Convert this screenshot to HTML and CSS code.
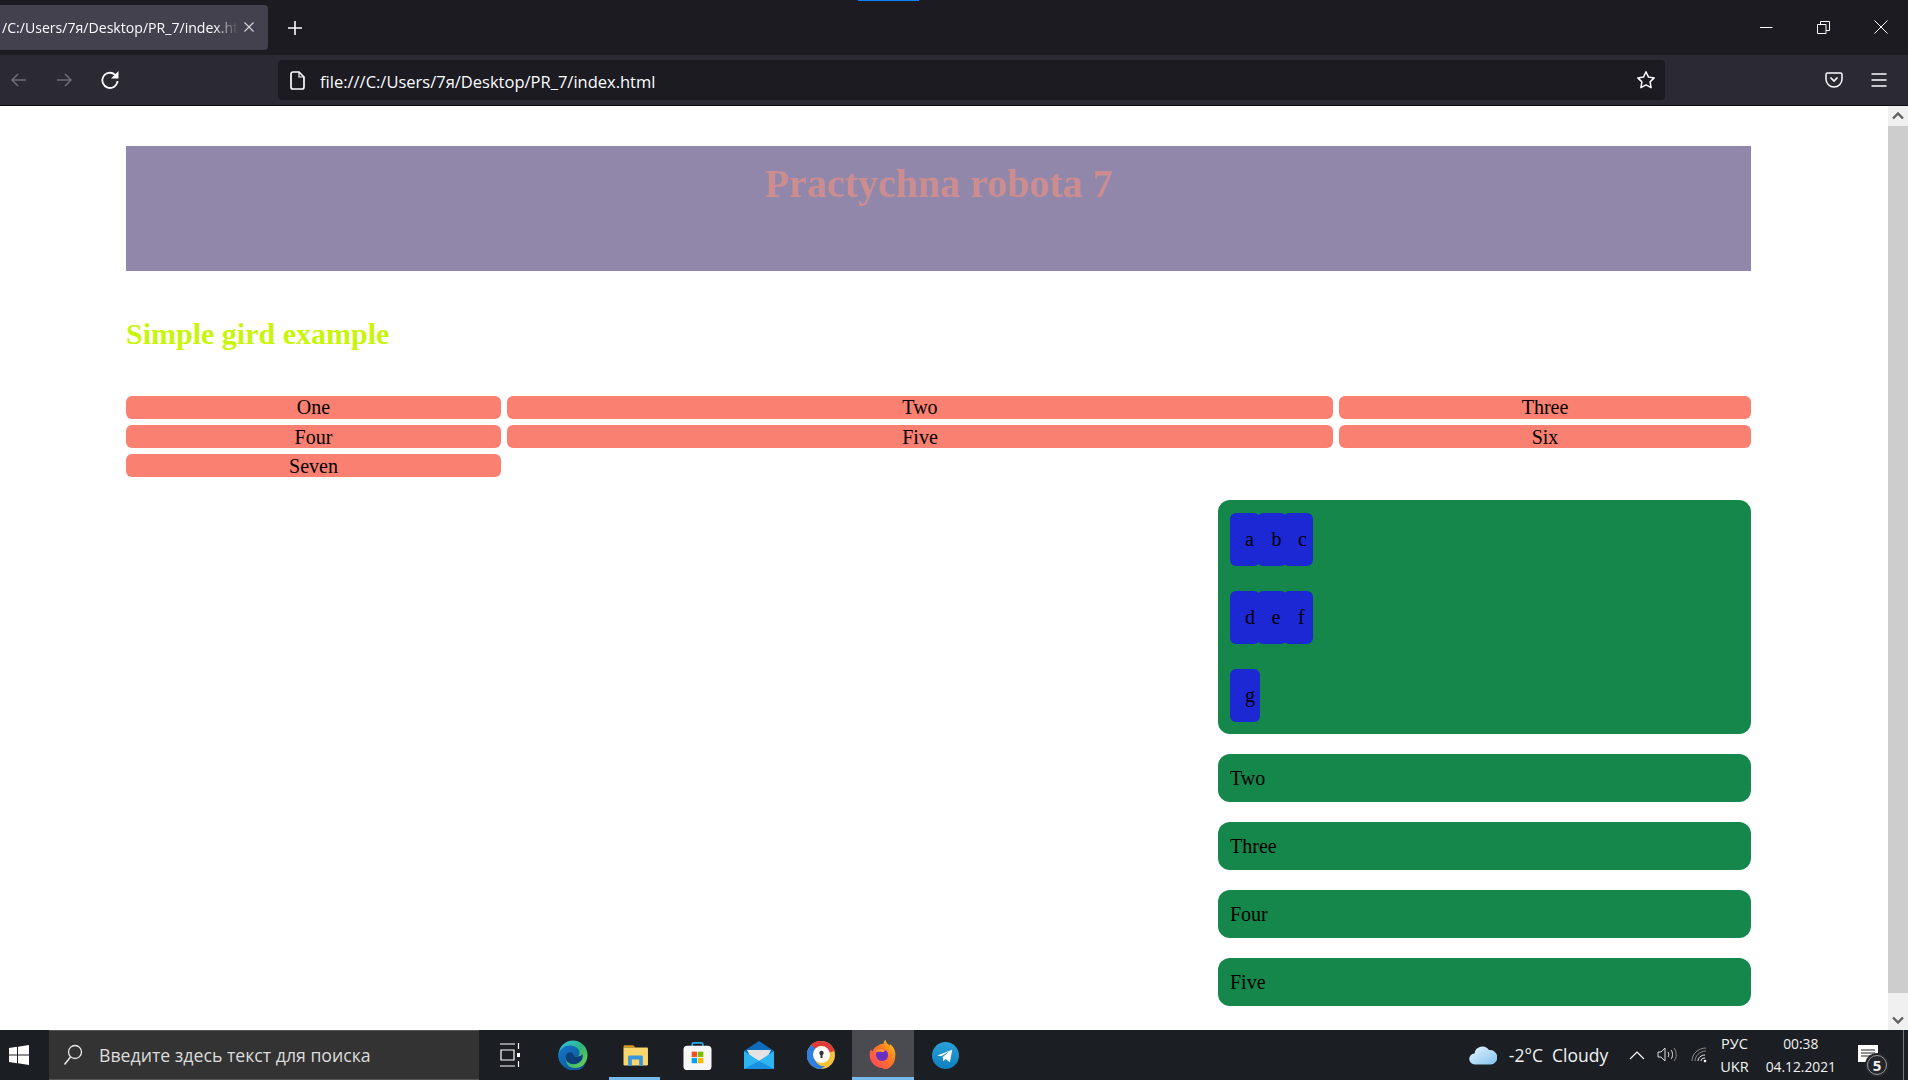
FILE: index.html
```html
<!DOCTYPE html>
<html lang="en">
<head>
  <meta charset="UTF-8" />
  <title>Practychna robota 7</title>
  <link rel="stylesheet" href="styles.css">
</head>
<body>
  <div class="tabbar">
    <div class="tab">
      <span class="tab-title">/C:/Users/7я/Desktop/PR_7/index.html</span>
      <svg class="tab-close" width="12" height="12" viewBox="0 0 12 12"><path d="M1.500 1.500l9 9M10.500 1.500l-9 9" stroke="#d8d8dc" stroke-width="1.100" fill="none"/></svg>
    </div>
    <svg class="tab-new" width="16" height="16" viewBox="0 0 16 16"><path d="M8 1v14M1 8h14" stroke="#fbfbfe" stroke-width="1.600" fill="none"/></svg>
    <div class="loading"></div>
    <div class="win-btns">
      <svg width="13" height="13" viewBox="0 0 13 13"><path d="M0 6.500h12.500" stroke="#fff" fill="none"/></svg>
      <svg width="13" height="13" viewBox="0 0 13 13"><path d="M.500 3.500h8.500v9H.500zM3.500 3.500V.500h9v9H9" stroke="#fff" fill="none"/></svg>
      <svg width="14" height="14" viewBox="0 0 14 14"><path d="M.500.500l13 13M13.500.500l-13 13" stroke="#fff" fill="none"/></svg>
    </div>
  </div>
  <div class="toolbar">
    <div class="nav">
      <svg width="18" height="16" viewBox="0 0 18 16"><path d="M16 8H2M8 2L2 8l6 6" stroke="#6e6e76" stroke-width="1.500" fill="none"/></svg>
      <svg width="18" height="16" viewBox="0 0 18 16"><path d="M2 8h14M10 2l6 6-6 6" stroke="#6e6e76" stroke-width="1.500" fill="none"/></svg>
      <svg width="20" height="20" viewBox="0 0 20 20"><path d="M17.500 11a7.600 7.600 0 1 1-2.600-6.400L17.500 7" stroke="#fbfbfe" stroke-width="1.800" fill="none"/><path d="M18.500 1v7.500H11z" fill="#fbfbfe"/></svg>
    </div>
    <div class="urlbar">
      <svg width="15" height="19" viewBox="0 0 15 19"><path d="M3 1h6l5 5v10a2 2 0 0 1-2 2H3a2 2 0 0 1-2-2V3a2 2 0 0 1 2-2z" stroke="#fbfbfe" stroke-width="1.700" fill="none"/><path d="M9 1v5h5" stroke="#fbfbfe" stroke-width="1.200" fill="none"/></svg>
      <span class="url">file:///C:/Users/7я/Desktop/PR_7/index.html</span>
      <svg class="star" width="20" height="20" viewBox="0 0 20 20"><path d="M10 1.800l2.500 5.300 5.700.8-4.100 4 1 5.800-5.100-2.800-5.100 2.800 1-5.800-4.100-4 5.700-.8z" stroke="#fbfbfe" stroke-width="1.500" stroke-linejoin="round" fill="none"/></svg>
    </div>
    <div class="tools">
      <svg width="18" height="16" viewBox="0 0 18 16"><path d="M2.500 1h13A1.500 1.500 0 0 1 17 2.500V7a8 8 0 0 1-16 0V2.500A1.500 1.500 0 0 1 2.500 1z" stroke="#fbfbfe" stroke-width="1.500" fill="none"/><path d="M5.500 5.500L9 9l3.500-3.500" stroke="#fbfbfe" stroke-width="1.700" fill="none"/></svg>
      <svg width="16" height="14" viewBox="0 0 16 14"><path d="M.500 1h15M.500 7h15M.500 13h15" stroke="#fbfbfe" stroke-width="1.400" fill="none"/></svg>
    </div>
  </div>

  <div class="viewport">
    <div class="page">
      <header class="banner"><h1>Practychna robota 7</h1></header>
      <h2 class="subtitle">Simple gird example</h2>
      <div class="simple-grid">
        <div class="cell">One</div>
        <div class="cell">Two</div>
        <div class="cell">Three</div>
        <div class="cell">Four</div>
        <div class="cell">Five</div>
        <div class="cell">Six</div>
        <div class="cell">Seven</div>
      </div>
      <div class="green-col">
        <div class="green-box nested">
          <div class="blue-row"><div class="blue">a</div><div class="blue">b</div><div class="blue">c</div></div>
          <div class="blue-row"><div class="blue">d</div><div class="blue">e</div><div class="blue">f</div></div>
          <div class="blue-row"><div class="blue">g</div></div>
        </div>
        <div class="green-box">Two</div>
        <div class="green-box">Three</div>
        <div class="green-box">Four</div>
        <div class="green-box">Five</div>
      </div>
    </div>
    <div class="scrollbar">
      <div class="sb-btn"><svg width="12" height="8" viewBox="0 0 12 8"><path d="M1 6.500l5-5 5 5" stroke="#606060" stroke-width="2.400" fill="none"/></svg></div>
      <div class="sb-thumb"></div>
      <div class="sb-btn"><svg width="12" height="8" viewBox="0 0 12 8"><path d="M1 1.500l5 5 5-5" stroke="#606060" stroke-width="2.400" fill="none"/></svg></div>
    </div>
  </div>

  <div class="taskbar">
    <div class="start"><svg width="20" height="20" viewBox="0 0 20 20"><path d="M0 3l8-1.200V9.500H0zM9 1.700L20 0v9.500H9zM0 10.500h8v7.700L0 17zM9 10.500h11V20L9 18.300z" fill="#fff"/></svg></div>
    <div class="search">
      <svg width="20" height="22" viewBox="0 0 20 22"><circle cx="12" cy="8" r="6.500" stroke="#e8e8e8" stroke-width="1.300" fill="none"/><path d="M7.500 13L1.500 20.500" stroke="#e8e8e8" stroke-width="1.500" fill="none"/></svg>
      <span>Введите здесь текст для поиска</span>
    </div>
    <div class="task-icons">
      <div class="task-icon task-view"><svg width="20" height="26" viewBox="0 0 20 26"><path d="M0 2h15M0 24h15M1 8h13v10H1z" stroke="#fff" stroke-width="1.200" fill="none"/><path d="M18.500 1v6M18.500 19v6" stroke="#fff" stroke-width="1.200"/><rect x="17" y="11" width="3" height="4" fill="#fff"/></svg></div>
      <div class="task-icon">
        <svg width="30" height="30" viewBox="0 0 32 32">
          <defs>
            <linearGradient id="edgeA" x1="0" y1="0" x2="1" y2="1"><stop offset="0" stop-color="#35c1f1"/><stop offset=".5" stop-color="#2fb57c"/><stop offset="1" stop-color="#7ad24a"/></linearGradient>
            <linearGradient id="edgeB" x1="0" y1="0" x2="1" y2="1"><stop offset="0" stop-color="#1478c8"/><stop offset="1" stop-color="#0c4f96"/></linearGradient>
          </defs>
          <circle cx="16" cy="16" r="15.500" fill="url(#edgeA)"/>
          <path d="M.500 16C2 8 9 5 15 6c5 1 8 4 8 8 0 3-3 4-6 3 0-3-2-4-5-3-4 1-5 7-2 12 2 3 7 5 13 3 3-1 5-2 7-5-3 8-10 9-14 9C8 32 0 25 .500 16z" fill="url(#edgeB)"/>
          <path d="M10 14c3-2 7-1 7 3 3 1 7 1 9-2 1 3 0 6-2 8-3 3-9 4-13 1-3-2-4-7-1-10z" fill="#0b3f7c"/>
        </svg>
      </div>
      <div class="task-icon active-app">
        <svg width="27" height="24" viewBox="0 0 28 26">
          <path d="M1 4a1.500 1.500 0 0 1 1.500-1.500h9L14 5H1z" fill="#d99a1c"/>
          <path d="M1 5h25.500a1 1 0 0 1 1 1v17a1.500 1.500 0 0 1-1.500 1.500H2.500A1.500 1.500 0 0 1 1 23z" fill="#fbd66a"/>
          <path d="M6 25V15a1.500 1.500 0 0 1 1.500-1.500h13A1.500 1.500 0 0 1 22 15v10h-4V18h-8v7z" fill="#3a96dd"/>
        </svg>
      </div>
      <div class="task-icon">
        <svg width="29" height="29" viewBox="0 0 30 30">
          <path d="M9.500 7V3.500a1.500 1.500 0 0 1 1.500-1.500h8a1.500 1.500 0 0 1 1.500 1.500V7" stroke="#2aa9e8" stroke-width="1.800" fill="none"/>
          <rect x=".500" y="5" width="29" height="25" rx="4" fill="#f7f7f7"/>
          <rect x="9" y="11" width="5.500" height="5.500" fill="#f25022"/><rect x="15.500" y="11" width="5.500" height="5.500" fill="#7fba00"/>
          <rect x="9" y="17.500" width="5.500" height="5.500" fill="#00a4ef"/><rect x="15.500" y="17.500" width="5.500" height="5.500" fill="#ffb900"/>
        </svg>
      </div>
      <div class="task-icon">
        <svg width="30" height="28" viewBox="0 0 30 28">
          <path d="M0 10L15 0l15 10v18H0z" fill="#0f6cbd"/>
          <path d="M3 9h24l-3 6-9 5-9-5z" fill="#e4e4e4"/>
          <path d="M0 10l15 10 15-10v18H0z" fill="#2cb5f2"/>
          <path d="M0 28l15-8 15 8z" fill="#1a8fe0"/>
        </svg>
      </div>
      <div class="task-icon">
        <svg width="28" height="28" viewBox="0 0 28 28">
          <circle cx="14" cy="14" r="14" fill="#f5c33b"/>
          <path d="M14 0a14 14 0 0 1 13.500 10L14 14 4 4a14 14 0 0 1 10-4z" fill="#de3b3b"/>
          <path d="M4 4A14 14 0 0 0 14 28l4-3C8 26 5 14 9 8z" fill="#2f7fe0"/>
          <circle cx="14.500" cy="13.500" r="8.500" fill="#fff"/>
          <circle cx="14.500" cy="12" r="2.200" fill="#333"/><rect x="13.500" y="12" width="2" height="5" fill="#333"/>
        </svg>
      </div>
      <div class="task-icon current">
        <svg width="28" height="30" viewBox="0 0 30 30">
          <defs>
            <linearGradient id="foxA" x1="0" y1="1" x2="1" y2="0"><stop offset="0" stop-color="#ff3d6b"/><stop offset=".6" stop-color="#ff7a1f"/><stop offset="1" stop-color="#ffd21f"/></linearGradient>
          </defs>
          <path d="M15 30A14 14 0 0 1 2 10c.5 1 1 2 2 2 1-3 3-5 6-6 2-2 4-2 6-2 0 0-1-3 2-4 0 3 2 4 4 6 1 0 0-1 0-2 5 3 7 9 6 14a14 14 0 0 1-13 14z" fill="url(#foxA)"/>
          <circle cx="14" cy="16" r="6.500" fill="#6a2fc4"/>
          <path d="M7 12c3-3 8-3 11-1l-3 2c-3-1-6 0-8-1z" fill="#ff9a2f"/>
        </svg>
      </div>
      <div class="task-icon">
        <svg width="27" height="27" viewBox="0 0 28 28">
          <defs><linearGradient id="tg" x1="0" y1="0" x2="0" y2="1"><stop offset="0" stop-color="#2aa1d8"/><stop offset="1" stop-color="#0f7fbf"/></linearGradient></defs>
          <circle cx="14" cy="14" r="14" fill="url(#tg)"/>
          <path d="M5.500 14L21 8l-2.500 13-4.500-3.300-2.300 2.200-.6-4.400 7-6-8.700 5.200z" fill="#fff"/>
        </svg>
      </div>
    </div>
    <div class="tray">
      <svg class="cloud" width="28" height="20" viewBox="0 0 28 20">
        <defs><linearGradient id="cl" x1="0" y1="0" x2="1" y2="1"><stop offset="0" stop-color="#eaf6ff"/><stop offset="1" stop-color="#7fc2ee"/></linearGradient></defs>
        <path d="M6 19.500a5.500 5.500 0 0 1-.5-11A8 8 0 0 1 20 5a6 6 0 0 1 2 14.500z" fill="url(#cl)"/>
      </svg>
      <span class="weather">-2°C&nbsp; Cloudy</span>
      <svg class="chevron" width="16" height="10" viewBox="0 0 16 10"><path d="M1 9l7-7 7 7" stroke="#fff" stroke-width="1.200" fill="none"/></svg>
      <svg width="22" height="16" viewBox="0 0 22 16"><path d="M1 5h3l4-4v13l-4-4H1zM11 5c1 1 1 4 0 5M14 3c2 2 2 7 0 9" stroke="#ddd" stroke-width="1" fill="none"/><path d="M17 1c3 4 3 10 0 13" stroke="#888" stroke-width="1" fill="none"/></svg>
      <svg class="wifi" width="16" height="16" viewBox="0 0 16 16"><path d="M1 14C1 7 7 1 15 1M4 14c0-5 5-10 11-10" stroke="#888" stroke-width="1" fill="none"/><path d="M7 14c0-3 3-6 7-6M10 14c0-1.500 1-3 4-3" stroke="#eee" stroke-width="1" fill="none"/><circle cx="14" cy="14" r="1.300" fill="#fff"/></svg>
      <div class="lang"><span>РУС</span><span>UKR</span></div>
      <div class="clock"><span>00:38</span><span>04.12.2021</span></div>
      <div class="notify">
        <svg width="20" height="17" viewBox="0 0 20 17"><path d="M0 0h20v17H0z" fill="#fff"/><path d="M3 5h14M3 8h14M3 11h14" stroke="#222" stroke-width="1"/></svg>
        <span class="badge">5</span>
      </div>
      <div class="show-desktop"></div>
    </div>
  </div>
</body>
</html>
```
FILE: styles.css
```css
* {
  box-sizing: border-box;
}
html, body {
  margin: 0;
  height: 100%;
  overflow: hidden;
}
body {
  display: flex;
  flex-direction: column;
  height: 1080px;
  background: #fff;
  font-family: "Liberation Serif", serif;
  font-size: 20px;
  color: #000;
}
svg {
  display: block;
  flex: none;
}

/* browser chrome */
.tabbar {
  position: relative;
  display: flex;
  align-items: center;
  height: 55px;
  background: #1c1b22;
}
.tab {
  display: flex;
  align-items: center;
  width: 268px;
  height: 45px;
  margin-top: -1px;
  padding-left: 2px;
  background: #42414d;
  border-radius: 0 4px 4px 0;
}
.tab-title {
  width: 236px;
  margin-top: 1px;
  overflow: hidden;
  white-space: nowrap;
  font: 14.100px "Open Sans", sans-serif;
  color: #fbfbfe;
  -webkit-mask-image: linear-gradient(to right, #000 90%, transparent);
  mask-image: linear-gradient(to right, #000 90%, transparent);
}
.tab-close {
  margin-left: 5px;
}
.tab-new {
  margin-left: 19px;
}
.loading {
  position: absolute;
  left: 858px;
  top: 0;
  width: 61px;
  height: 1px;
  background: #0a84ff;
}
.win-btns {
  display: flex;
  align-items: center;
  gap: 44px;
  margin-left: auto;
  padding-right: 20px;
  margin-top: -1px;
}
.toolbar {
  display: flex;
  align-items: center;
  height: 51px;
  background: #2b2a33;
  border-bottom: 1px solid #0c0c0d;
}
.nav {
  display: flex;
  align-items: center;
  gap: 27px;
  width: 278px;
  padding-left: 10px;
}
.urlbar {
  display: flex;
  align-items: center;
  width: 1387px;
  height: 40px;
  padding: 0 9px 0 12px;
  background: #1c1b22;
  border-radius: 4px;
}
.url {
  margin: 2px 0 0 15px;
  font: 16.500px "Open Sans", sans-serif;
  color: #fbfbfe;
}
.star {
  margin-left: auto;
}
.tools {
  display: flex;
  align-items: center;
  gap: 28px;
  margin-left: 160px;
}

/* page */
.viewport {
  display: flex;
  flex: 1;
  min-height: 0;
}
.page {
  flex: 1;
  min-width: 0;
  padding: 40px 137px 0 126px;
}
.banner {
  height: 125px;
  background: #9087ab;
  padding-top: 15px;
  text-align: center;
}
.banner h1 {
  margin: 0;
  font-size: 40px;
  line-height: 46px;
  font-weight: bold;
  color: #cb8d90;
}
.subtitle {
  margin: 46px 0 45px;
  font-size: 30px;
  line-height: 34px;
  color: #c9f50a;
}
.simple-grid {
  display: grid;
  grid-template-columns: 375px 826px 412px;
  gap: 6px;
}
.cell {
  height: 23px;
  background: #fa8072;
  border-radius: 6px;
  text-align: center;
  line-height: 24px;
}
.cell:nth-child(-n+3) {
  line-height: 23px;
}
.green-col {
  width: 533px;
  margin: 23px 0 0 auto;
}
.green-box {
  height: 48px;
  margin-bottom: 20px;
  padding: 0 12px;
  background: #15874b;
  border-radius: 12px;
  line-height: 48px;
}
.green-box.nested {
  height: 234px;
  padding-top: 13px;
}
.blue-row {
  display: flex;
  margin-bottom: 25px;
}
.blue {
  width: 30px;
  height: 53px;
  margin-right: -3.500px;
  padding-left: 15px;
  background: #1b28d4;
  border-radius: 6px;
  line-height: 53px;
}
.scrollbar {
  display: flex;
  flex-direction: column;
  width: 20px;
  background: #f0f0f0;
}
.sb-btn {
  display: flex;
  align-items: center;
  justify-content: center;
  height: 20px;
}
.sb-thumb {
  flex: 1;
  margin-bottom: 17px;
  background: #cdcdcd;
}

/* windows taskbar */
.taskbar {
  display: flex;
  align-items: center;
  height: 50px;
  background: #1b1f24;
  color: #fff;
  font-family: "Open Sans", sans-serif;
}
.start {
  display: flex;
  align-items: center;
  width: 49px;
  height: 50px;
  padding-left: 9px;
}
.search {
  display: flex;
  align-items: center;
  gap: 16px;
  width: 430px;
  height: 50px;
  padding-left: 14px;
  background: #333;
  border-top: 1px solid #555;
  border-bottom: 1px solid #555;
  font-size: 17.700px;
  color: #dcdcdc;
}
.task-icons {
  display: flex;
  height: 50px;
}
.task-icon {
  position: relative;
  display: flex;
  align-items: center;
  justify-content: center;
  width: 62px;
  height: 50px;
}
.task-view {
  margin-right: 1px;
}
.active-app::after {
  content: "";
  position: absolute;
  left: 5px;
  right: 6px;
  bottom: 0;
  height: 3px;
  background: #76b9ed;
}
.task-icon.current {
  background: #4a4b50;
  border-bottom: 3px solid #76b9ed;
}
.tray {
  display: flex;
  align-items: center;
  margin-left: auto;
  height: 50px;
  font-size: 16px;
  color: #f2f2f2;
}
.cloud {
  margin-right: 12px;
}
.weather {
  font-size: 17.500px;
  margin-right: 21px;
}
.chevron {
  margin-right: 12px;
}
.wifi {
  margin-left: 12px;
}
.lang {
  display: flex;
  flex-direction: column;
  align-items: center;
  gap: 3px;
  margin-left: 13px;
  font-size: 14.500px;
  line-height: 20px;
}
.clock {
  display: flex;
  flex-direction: column;
  align-items: center;
  gap: 3px;
  margin-left: 17px;
  font-size: 13.800px;
  line-height: 20px;
}
.notify {
  position: relative;
  width: 30px;
  height: 30px;
  margin: 0 15px 0 22px;
  padding-top: 5px;
}
.badge {
  position: absolute;
  left: 9px;
  top: 15px;
  width: 20px;
  height: 20px;
  border: 1px solid #999;
  border-radius: 50%;
  background: #24272b;
  box-shadow: 0 0 0 2px #24272b;
  font-size: 15px;
  font-weight: bold;
  line-height: 18px;
  text-align: center;
}
.show-desktop {
  width: 5px;
  height: 50px;
  border-left: 1px solid #777;
}
```
